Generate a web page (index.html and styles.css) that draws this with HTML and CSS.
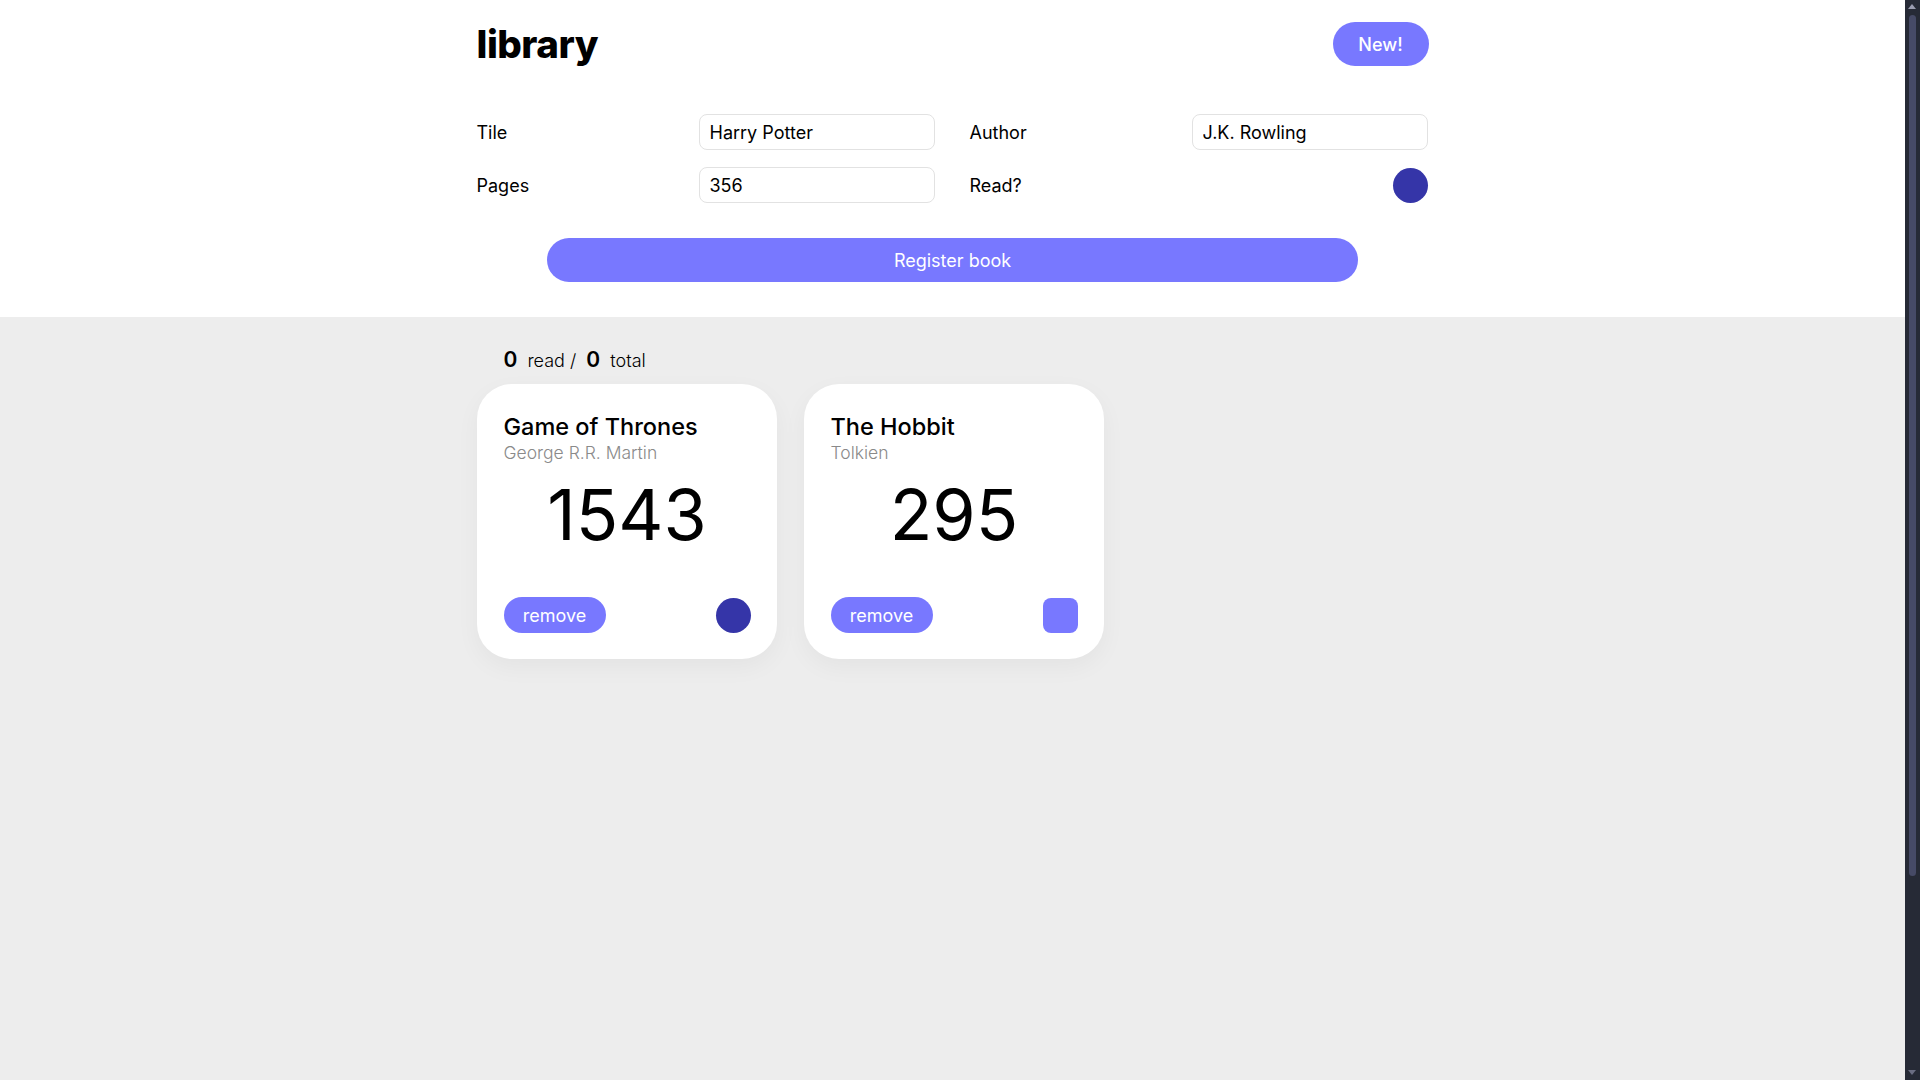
FILE: index.html
```html
<!DOCTYPE html>
<html lang="en">
<head>
<meta charset="utf-8">
<title>library</title>
<link rel="stylesheet" href="styles.css">
</head>
<body>
<section class="top">
  <div class="container">
    <header class="header">
      <h1 class="logo">library</h1>
      <button class="btn btn-new">New!</button>
    </header>
    <form class="form">
      <label class="label" for="title">Tile</label>
      <input class="input" id="title" type="text" value="Harry Potter">
      <span></span>
      <label class="label" for="author">Author</label>
      <input class="input" id="author" type="text" value="J.K. Rowling">
      <label class="label" for="pages">Pages</label>
      <input class="input" id="pages" type="text" value="356">
      <span></span>
      <label class="label" for="read">Read?</label>
      <div class="check-cell"><span class="check check-on" id="read"></span></div>
    </form>
    <div class="register-row">
      <button class="btn btn-register">Register book</button>
    </div>
  </div>
</section>
<main class="shelf">
  <div class="container">
    <p class="counter"><b>0</b> read / <b>0</b> total</p>
    <div class="cards">
      <article class="card">
        <h2 class="card-title">Game of Thrones</h2>
        <p class="card-author">George R.R. Martin</p>
        <p class="card-pages">1543</p>
        <div class="card-foot">
          <button class="btn btn-remove">remove</button>
          <span class="check check-on"></span>
        </div>
      </article>
      <article class="card">
        <h2 class="card-title">The Hobbit</h2>
        <p class="card-author">Tolkien</p>
        <p class="card-pages">295</p>
        <div class="card-foot">
          <button class="btn btn-remove">remove</button>
          <span class="check check-off"></span>
        </div>
      </article>
    </div>
  </div>
</main>
<div class="scrollbar" aria-hidden="true">
  <span class="sb-arrow sb-up"></span>
  <span class="sb-thumb"></span>
  <span class="sb-arrow sb-down"></span>
</div>
</body>
</html>
```
FILE: styles.css
```css
html {
  scrollbar-width: none;
}
* { box-sizing: border-box; }
body {
  margin: 0;
  padding-right: 15px;
  font-family: Inter, "Noto Sans", "DejaVu Sans", sans-serif;
  color: #000;
  background: #ededed;
}
.container {
  width: 952px;
  margin: 0 auto;
}
.top {
  background: #fff;
  padding: 22px 0 35px;
}
.header {
  display: flex;
  justify-content: space-between;
  align-items: center;
  height: 44px;
}
.logo {
  margin: 0;
  font-size: 38.5px;
  font-weight: 800;
  letter-spacing: -0.5px;
  line-height: 44px;
}
.btn {
  border: none;
  font-family: inherit;
  color: #fff;
  background: #7878ff;
  cursor: pointer;
  border-radius: 999px;
}
.btn-new {
  width: 96px;
  height: 44px;
  font-size: 18px;
  font-weight: 500;
}
.form {
  margin-top: 48px;
  display: grid;
  grid-template-columns: 222px 236px 35px 222px 236px;
  row-gap: 17px;
  align-items: center;
}
.label {
  font-size: 18px;
  font-weight: 400;
}
.input {
  height: 36px;
  width: 236px;
  border: 1px solid #e2e2e2;
  border-radius: 8px;
  padding: 0 10px;
  font-family: inherit;
  font-size: 18px;
  color: #000;
  background: #fff;
  outline: none;
}
.check-cell {
  display: flex;
  justify-content: flex-end;
}
.check {
  display: block;
  width: 35px;
  height: 35px;
}
.check-on {
  border-radius: 50%;
  background: #3535a8;
}
.check-off {
  border-radius: 8px;
  background: #7878ff;
}
.register-row {
  margin-top: 35px;
  display: flex;
  justify-content: center;
}
.btn-register {
  width: 811px;
  height: 44px;
  font-size: 18px;
  font-weight: 400;
}
.shelf {
  min-height: 1003px;
  padding-top: 27px;
}
.counter {
  margin: 0 0 9px;
  padding-left: 27px;
  height: 31px;
  line-height: 31px;
  font-size: 18px;
  font-weight: 300;
}
.counter b {
  font-size: 21px;
  font-weight: 600;
  margin-right: 5px;
}
.counter b:nth-of-type(2) {
  margin-left: 5px;
}
.cards {
  display: flex;
  gap: 27px;
}
.card {
  width: 300px;
  height: 275px;
  background: #fff;
  border-radius: 35px;
  padding: 28px 26px 26px 27px;
  display: flex;
  flex-direction: column;
  box-shadow: 0 8px 24px rgba(0, 0, 0, 0.045);
}
.card-title {
  margin: 0;
  font-size: 23.5px;
  font-weight: 500;
  line-height: 30px;
}
.card-author {
  margin: 0;
  font-size: 17.5px;
  font-weight: 300;
  color: #8a8a8a;
  line-height: 22px;
}
.card-pages {
  margin: 9px 0 0;
  text-align: center;
  font-size: 70px;
  font-weight: 400;
  line-height: 84px;
}
.card-foot {
  margin-top: auto;
  display: flex;
  justify-content: space-between;
  align-items: center;
}
.btn-remove {
  width: 102px;
  height: 36px;
  font-size: 18px;
  font-weight: 400;
}
.scrollbar {
  position: fixed;
  top: 0;
  right: 0;
  width: 15px;
  height: 100vh;
  background: #262a36;
}
.sb-thumb {
  position: absolute;
  left: 4px;
  right: 4px;
  top: 15px;
  height: 861px;
  border-radius: 4px;
  background: #464a66;
}
.sb-arrow {
  position: absolute;
  left: 3px;
  width: 0;
  height: 0;
  border-left: 4.5px solid transparent;
  border-right: 4.5px solid transparent;
}
.sb-up {
  top: 4px;
  border-bottom: 5px solid #9a9cb0;
}
.sb-down {
  bottom: 5px;
  border-top: 5px solid #6a6d82;
}
```
